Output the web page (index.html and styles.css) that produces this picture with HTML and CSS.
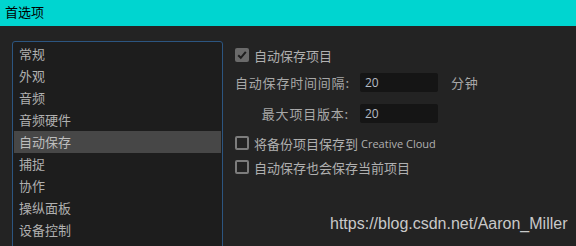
FILE: index.html
```html
<!DOCTYPE html>
<html lang="zh">
<head>
<meta charset="utf-8">
<link rel="stylesheet" href="styles.css">
</head>
<body>
<div class="titlebar">首选项</div>
<div class="main">
  <ul class="list">
    <li>常规</li>
    <li>外观</li>
    <li>音频</li>
    <li>音频硬件</li>
    <li class="sel">自动保存</li>
    <li>捕捉</li>
    <li>协作</li>
    <li>操纵面板</li>
    <li>设备控制</li>
    <li>图形</li>
  </ul>
  <div class="pane">
    <label class="check row1"><span class="box on"><svg viewBox="0 0 14 14" width="14" height="14"><path d="M3.2 7.2 L5.8 9.8 L10.8 3.8" fill="none" stroke="#1e1e1e" stroke-width="2"/></svg></span>自动保存项目</label>
    <div class="field f1"><span class="lbl">自动保存时间间隔:</span><span class="input">20</span><span class="unit">分钟</span></div>
    <div class="field f2"><span class="lbl">最大项目版本:</span><span class="input">20</span></div>
    <label class="check row2"><span class="box"></span>将备份项目保存到 <span class="latin">Creative Cloud</span></label>
    <label class="check row3"><span class="box"></span>自动保存也会保存当前项目</label>
  </div>
</div>
<div class="watermark">https://blog.csdn.net/Aaron_Miller</div>
</body>
</html>
```
FILE: styles.css
```css
html, body {
  margin: 0;
  padding: 0;
  background: #232323;
  overflow: hidden;
  height: 246px;
}
body {
  font-family: "Noto Sans CJK SC", "Noto Sans", sans-serif;
  font-size: 13px;
  color: #b4b4b4;
  position: relative;
}
.titlebar {
  height: 26px;
  background: #00d5d0;
  color: #000;
  font-size: 13px;
  line-height: 24px;
  padding-left: 5px;
  box-sizing: border-box;
}
.main {
  display: flex;
  padding-top: 15px;
  padding-left: 12px;
}
.list {
  list-style: none;
  margin: 0;
  padding: 1px 1px;
  width: 207px;
  height: 240px;
  border: 1px solid #2c5580;
  border-radius: 3px;
  background: #1d1d1d;
  flex: none;
}
.list li {
  height: 22px;
  line-height: 22px;
  padding-left: 5px;
  color: #b0b0b0;
}
.list li.sel {
  background: #474747;
  color: #bdbdbd;
}
.pane {
  display: flex;
  flex-direction: column;
  padding-left: 12px;
  padding-top: 3px;
}
.check {
  display: flex;
  align-items: center;
  height: 22px;
  color: #b0b0b0;
}
.box {
  width: 14px;
  height: 14px;
  box-sizing: border-box;
  border: 2px solid #7c7c7c;
  border-radius: 2px;
  margin-right: 5px;
  flex: none;
  display: flex;
}
.box.on {
  background: #6a6a6a;
  border: none;
}
.latin {
  font-family: "Open Sans", "Noto Sans", sans-serif;
  font-size: 11px;
  margin-left: 3px;
}
.field {
  display: flex;
  align-items: center;
  height: 20px;
}
.f1 { margin-top: 6px; }
.f2 { margin-top: 11px; }
.lbl {
  width: 114px;
  text-align: right;
  padding-right: 11px;
  color: #a8a8a8;
  letter-spacing: 0.8px;
  white-space: nowrap;
}
.input {
  width: 78px;
  height: 19px;
  box-sizing: border-box;
  background: #151515;
  border-radius: 2px;
  padding-left: 5px;
  line-height: 19px;
  color: #b5bcc4;
  font-family: "Open Sans", "Noto Sans", sans-serif;
  font-size: 12px;
}
.unit {
  margin-left: 13px;
  color: #a8a8a8;
  letter-spacing: 0.8px;
}
.row2 { margin-top: 9px; }
.row3 { margin-top: 2px; }
.watermark {
  position: absolute;
  left: 330px;
  top: 215px;
  font-family: "Liberation Sans", Arial, sans-serif;
  font-size: 16px;
  color: #c9c9c9;
  white-space: nowrap;
}
```
